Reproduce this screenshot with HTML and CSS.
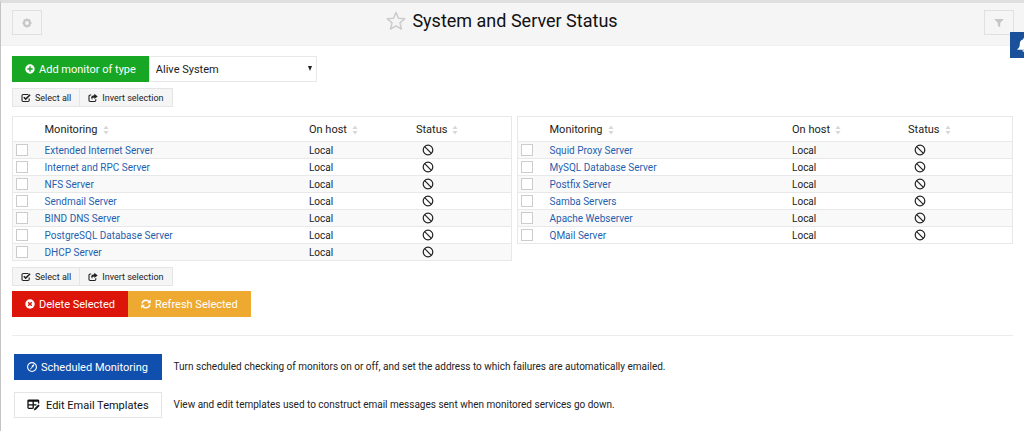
FILE: index.html
```html
<!DOCTYPE html>
<html lang="en">
<head>
<meta charset="utf-8">
<title>System and Server Status</title>
<link rel="stylesheet" href="styles.css">
</head>
<body>
<svg class="sprite" aria-hidden="true">
  <symbol id="i-gear" viewBox="0 0 12 12"><path fill="currentColor" fill-rule="evenodd" d="M5 .6h2l.5 1.300L8.800 1.300l1.900 1.900-.6 1.300 1.300.5v2l-1.300.5.6 1.300-1.900 1.900-1.300-.6L7 11.400H5l-.5-1.300-1.300.6-1.900-1.900.6-1.300L.6 7V5l1.300-.5-.6-1.300 1.900-1.900 1.300.6zM6 3.700a2.300 2.300 0 1 0 0 4.600 2.300 2.300 0 0 0 0-4.600z"/></symbol>
  <symbol id="i-star" viewBox="0 0 20 20"><path fill="none" stroke="currentColor" stroke-width="1.500" stroke-linejoin="round" d="M10 1.500l2.500 5.700 6.200.6-4.700 4.100 1.400 6.100-5.400-3.200L4.600 18 6 11.900 1.300 7.800l6.200-.6z"/></symbol>
  <symbol id="i-filter" viewBox="0 0 10 10"><path fill="currentColor" d="M.6 1h8.800v.6L6.200 5v4.600L3.900 7.800V5L.6 1.600z"/></symbol>
  <symbol id="i-bell" viewBox="0 0 14 14"><path fill="currentColor" d="M7 .3c.6 0 1 .4 1 1v.3c2 .5 3.200 2 3.200 4.100 0 3 .9 4.400 2.500 5.500v.6H.3v-.6c1.600-1.100 2.500-2.500 2.500-5.500C2.800 3.600 4 2.100 6 1.600v-.3c0-.6.4-1 1-1zM5.300 12.300h3.400a1.700 1.500 0 0 1-3.400 0z"/></symbol>
  <symbol id="i-plus" viewBox="0 0 10 10"><path fill="currentColor" fill-rule="evenodd" d="M5 .3a4.700 4.700 0 1 0 0 9.400A4.700 4.700 0 0 0 5 .3zM4.300 2.300h1.400v2h2v1.400h-2v2H4.300v-2h-2V4.300h2z"/></symbol>
  <symbol id="i-times" viewBox="0 0 10 10"><path fill="currentColor" d="M5 .3a4.700 4.700 0 1 0 0 9.400A4.700 4.700 0 0 0 5 .3z"/><path fill="none" stroke="#dc1409" stroke-width="1.500" d="M3.200 3.200l3.600 3.600M6.800 3.200L3.200 6.800"/></symbol>
  <symbol id="i-refresh" viewBox="0 0 10 10"><path fill="none" stroke="currentColor" stroke-width="1.500" d="M1.100 4.300C1.500 2.400 3.100 1.200 5 1.200c1.400 0 2.500.6 3.200 1.600M8.900 5.700C8.500 7.600 6.900 8.800 5 8.800c-1.400 0-2.500-.6-3.200-1.600"/><path fill="currentColor" d="M9.700.6v3.600H6.100zM.3 9.400V5.800h3.600z"/></symbol>
  <symbol id="i-clock" viewBox="0 0 12 12"><circle cx="6" cy="6" r="5.300" fill="none" stroke="currentColor" stroke-width="1.300"/><path fill="none" stroke="currentColor" stroke-width="1.200" d="M8.200 3L6 6.200 4 8.800"/><path fill="currentColor" d="M8.800 2.400L7.400 6.600 5.200 5z"/></symbol>
  <symbol id="i-table-edit" viewBox="0 0 13 12"><path fill="none" stroke="currentColor" stroke-width="1.300" d="M11.600 4.500V1.900c0-.5-.3-.8-.8-.8H1.800c-.5 0-.8.3-.8.8v6.700c0 .5.3.8.8.8h4M1 5.800h8.500M6.200 2v7.400"/><path fill="currentColor" d="M1 1h10.600v1.800H1zM11.300 5.400l1.400 1.400-3.900 4-2 .6.600-2z"/></symbol>
  <symbol id="i-check-square" viewBox="0 0 10 10"><path fill="none" stroke="currentColor" stroke-width="1.100" d="M8.200 5.600v1.700c0 .7-.5 1.200-1.200 1.200H2.200C1.500 8.500 1 8 1 7.300V2.700c0-.7.500-1.200 1.200-1.200H7.400"/><path fill="none" stroke="currentColor" stroke-width="1.500" d="M2.800 4.200l1.900 1.900 4.400-4.400"/></symbol>
  <symbol id="i-share" viewBox="0 0 10 10"><path fill="none" stroke="currentColor" stroke-width="1.100" d="M7.800 6.300v1c0 .7-.5 1.200-1.200 1.200H2.200C1.500 8.500 1 8 1 7.300V3.200C1 2.500 1.500 2 2.200 2h1"/><path fill="currentColor" d="M6.300.7l3.400 2.700-3.400 2.700V4.500C4.600 4.500 4 5.200 4.400 6.900 2.300 4.800 3.200 2.400 6.300 2.300z"/></symbol>
  <symbol id="i-ban" viewBox="0 0 12 12"><g fill="none" stroke="currentColor" stroke-width="1.200"><circle cx="6" cy="6" r="4.800"/><path d="M2.700 2.700l6.600 6.600"/></g></symbol>
  <symbol id="i-sort" viewBox="0 0 6 10"><path fill="currentColor" d="M3 .6L5.600 4H.4zM3 9.400L.4 6h5.200z"/></symbol>
</svg>
<main class="page">
  <header class="header">
    <button class="tool" type="button" aria-label="Module config"><svg class="icon-10"><use href="#i-gear"/></svg></button>
    <h1 class="title"><svg class="icon-20"><use href="#i-star"/></svg>System and Server Status</h1>
    <button class="tool" type="button" aria-label="Filter"><svg class="icon-10"><use href="#i-filter"/></svg></button>
  </header>
  <button class="bell" type="button" aria-label="Notifications"><svg class="icon-14"><use href="#i-bell"/></svg></button>

  <div class="content">
    <div class="group">
      <button class="btn green" type="button"><svg class="icon-10"><use href="#i-plus"/></svg>Add monitor of type</button>
      <span class="select-wrap"><select class="select" aria-label="Monitor type"><option>Alive System</option></select></span>
    </div>
    <div class="group small-group">
      <button class="small" type="button"><svg class="icon-10"><use href="#i-check-square"/></svg>Select all</button>
      <button class="small" type="button"><svg class="icon-10"><use href="#i-share"/></svg>Invert selection</button>
    </div>

    <div class="tables">
      <table class="monitors">
        <colgroup><col class="c-check"><col class="c-name-a"><col class="c-host-a"><col></colgroup>
        <thead><tr><td></td><th>Monitoring<svg class="sort"><use href="#i-sort"/></svg></th><th>On host<svg class="sort"><use href="#i-sort"/></svg></th><th>Status<svg class="sort"><use href="#i-sort"/></svg></th></tr></thead>
        <tbody>
          <tr><td><input type="checkbox" aria-label="Extended Internet Server"></td><td><a href="#">Extended Internet Server</a></td><td>Local</td><td class="status"><svg class="icon-12"><use href="#i-ban"/></svg></td></tr>
          <tr><td><input type="checkbox" aria-label="Internet and RPC Server"></td><td><a href="#">Internet and RPC Server</a></td><td>Local</td><td class="status"><svg class="icon-12"><use href="#i-ban"/></svg></td></tr>
          <tr><td><input type="checkbox" aria-label="NFS Server"></td><td><a href="#">NFS Server</a></td><td>Local</td><td class="status"><svg class="icon-12"><use href="#i-ban"/></svg></td></tr>
          <tr><td><input type="checkbox" aria-label="Sendmail Server"></td><td><a href="#">Sendmail Server</a></td><td>Local</td><td class="status"><svg class="icon-12"><use href="#i-ban"/></svg></td></tr>
          <tr><td><input type="checkbox" aria-label="BIND DNS Server"></td><td><a href="#">BIND DNS Server</a></td><td>Local</td><td class="status"><svg class="icon-12"><use href="#i-ban"/></svg></td></tr>
          <tr><td><input type="checkbox" aria-label="PostgreSQL Database Server"></td><td><a href="#">PostgreSQL Database Server</a></td><td>Local</td><td class="status"><svg class="icon-12"><use href="#i-ban"/></svg></td></tr>
          <tr><td><input type="checkbox" aria-label="DHCP Server"></td><td><a href="#">DHCP Server</a></td><td>Local</td><td class="status"><svg class="icon-12"><use href="#i-ban"/></svg></td></tr>
        </tbody>
      </table>
      <table class="monitors">
        <colgroup><col class="c-check"><col class="c-name-b"><col class="c-host-b"><col></colgroup>
        <thead><tr><td></td><th>Monitoring<svg class="sort"><use href="#i-sort"/></svg></th><th>On host<svg class="sort"><use href="#i-sort"/></svg></th><th>Status<svg class="sort"><use href="#i-sort"/></svg></th></tr></thead>
        <tbody>
          <tr><td><input type="checkbox" aria-label="Squid Proxy Server"></td><td><a href="#">Squid Proxy Server</a></td><td>Local</td><td class="status"><svg class="icon-12"><use href="#i-ban"/></svg></td></tr>
          <tr><td><input type="checkbox" aria-label="MySQL Database Server"></td><td><a href="#">MySQL Database Server</a></td><td>Local</td><td class="status"><svg class="icon-12"><use href="#i-ban"/></svg></td></tr>
          <tr><td><input type="checkbox" aria-label="Postfix Server"></td><td><a href="#">Postfix Server</a></td><td>Local</td><td class="status"><svg class="icon-12"><use href="#i-ban"/></svg></td></tr>
          <tr><td><input type="checkbox" aria-label="Samba Servers"></td><td><a href="#">Samba Servers</a></td><td>Local</td><td class="status"><svg class="icon-12"><use href="#i-ban"/></svg></td></tr>
          <tr><td><input type="checkbox" aria-label="Apache Webserver"></td><td><a href="#">Apache Webserver</a></td><td>Local</td><td class="status"><svg class="icon-12"><use href="#i-ban"/></svg></td></tr>
          <tr><td><input type="checkbox" aria-label="QMail Server"></td><td><a href="#">QMail Server</a></td><td>Local</td><td class="status"><svg class="icon-12"><use href="#i-ban"/></svg></td></tr>
        </tbody>
      </table>
    </div>

    <div class="group">
      <button class="small" type="button"><svg class="icon-10"><use href="#i-check-square"/></svg>Select all</button>
      <button class="small" type="button"><svg class="icon-10"><use href="#i-share"/></svg>Invert selection</button>
    </div>
    <div class="group actions">
      <button class="btn red" type="button"><svg class="icon-10"><use href="#i-times"/></svg>Delete Selected</button>
      <button class="btn amber" type="button"><svg class="icon-10"><use href="#i-refresh"/></svg>Refresh Selected</button>
    </div>
    <hr class="rule">
    <div class="links">
      <button class="btn blue" type="button"><svg class="icon-10"><use href="#i-clock"/></svg>Scheduled Monitoring</button>
      <p class="desc">Turn scheduled checking of monitors on or off, and set the address to which failures are automatically emailed.</p>
      <button class="btn white" type="button"><svg class="icon-13"><use href="#i-table-edit"/></svg>Edit Email Templates</button>
      <p class="desc">View and edit templates used to construct email messages sent when monitored services go down.</p>
    </div>
  </div>
</main>
</body>
</html>
```
FILE: styles.css
```css
* { box-sizing: border-box; }

body {
  margin: 0;
  overflow: hidden;
  background: #fff;
  color: #222;
  font-family: Roboto, "Liberation Sans", sans-serif;
  font-size: 10px;
}

button, select { font: inherit; color: inherit; margin: 0; }
.sprite { position: absolute; width: 0; height: 0; }

.page {
  position: relative;
  min-height: 100vh;
  border-top: 3px solid #dfdfdf;
  border-left: 1px solid #c4c4c4;
}

.icon-10 { width: 10px; height: 10px; flex: none; }
.icon-12 { width: 12px; height: 12px; flex: none; }
.icon-13 { width: 13px; height: 12px; flex: none; }
.icon-14 { width: 14px; height: 14px; flex: none; }
.icon-20 { width: 20px; height: 20px; flex: none; color: #ccc; }

.header {
  display: flex;
  justify-content: space-between;
  align-items: flex-start;
  padding: 7px 10px 10px 11px;
  background: #f5f5f5;
  border-bottom: 1px solid #f0f0f0;
}

.tool {
  display: flex;
  align-items: center;
  justify-content: center;
  width: 30px;
  height: 25px;
  padding: 0;
  border: 1px solid #e0e0e0;
  background: #f5f5f5;
  color: #c6c6c6;
}

.title {
  display: flex;
  align-items: center;
  gap: 6px;
  margin: 0 22px 0 0;
  color: #111;
  font-size: 18px;
  font-weight: 400;
  line-height: 22px;
}

.bell {
  position: absolute;
  top: 29px;
  right: -14px;
  display: flex;
  align-items: center;
  justify-content: center;
  width: 28px;
  height: 26px;
  padding: 0;
  border: 0;
  background: #1b519b;
  color: #fff;
}

.content { padding: 10px 11px 13px; }
.group { display: flex; }

.btn {
  display: flex;
  align-items: center;
  gap: 4px;
  height: 26px;
  padding: 0 13px;
  border: 0;
  color: #fff;
  font-size: 11px;
  white-space: nowrap;
}

.green { background: #18a725; }
.red { background: #dc1409; }
.amber { background: #eeaa30; }
.blue { background: #114fae; }
.white {
  gap: 6px;
  padding: 0 12px;
  border: 1px solid #e5e5e5;
  background: #fff;
  color: #111;
}

.select-wrap { position: relative; display: flex; width: 168px; }
.select-wrap::after {
  content: "";
  position: absolute;
  top: 10px;
  right: 5px;
  border: 2px solid transparent;
  border-top: 5px solid #222;
  border-bottom: 0;
  pointer-events: none;
}
.select {
  appearance: none;
  width: 100%;
  height: 26px;
  padding: 0 6px;
  border: 1px solid #e8e8e8;
  border-radius: 0;
  background: #fff;
  font-size: 11px;
}

.small-group { margin-top: 6px; }
.small {
  display: flex;
  align-items: center;
  gap: 4px;
  height: 19px;
  padding: 0 8px;
  border: 1px solid #e5e5e5;
  background: #f5f5f5;
  font-size: 9px;
  white-space: nowrap;
}
.small + .small { border-left: 0; }

.tables {
  display: grid;
  grid-template-columns: 125fr 124fr;
  gap: 5px;
  align-items: start;
  margin: 9px 0 6px;
}

.monitors {
  width: 100%;
  table-layout: fixed;
  border-collapse: collapse;
  border: 1px solid #e8e8e8;
}
.c-check { width: 28px; }
.c-name-a { width: 53%; }
.c-host-a { width: 107px; }
.c-name-b { width: 49%; }
.c-host-b { width: 116px; }

.monitors th {
  height: 25px;
  padding: 0 4px;
  text-align: left;
  font-size: 11px;
  font-weight: 400;
}
.monitors td { padding: 0 4px; line-height: 15px; }
.monitors td:first-child { padding: 0 3px; }
.monitors tbody tr { height: 17px; border-top: 1px solid #e8e8e8; }
.monitors tbody tr:nth-child(odd) { background: #f9f9f9; }
.monitors a { color: #1f5fae; text-decoration: none; }
.monitors svg { vertical-align: middle; }
.monitors .status { padding-left: 10px; line-height: 0; }
.monitors .sort { width: 6px; height: 10px; margin-left: 5px; color: #d8d8d8; }

.monitors input {
  appearance: none;
  display: block;
  width: 12px;
  height: 12px;
  margin: 0;
  border: 1px solid #ccc;
  background: #fff;
}

.actions { margin-top: 5px; }
.rule { margin: 18px 0; border: 0; border-top: 1px solid #ececec; }

.links {
  display: grid;
  grid-template-columns: max-content 1fr;
  align-items: center;
  gap: 12px;
  padding-left: 2px;
}
.desc { margin: 0; line-height: 16px; }
```
